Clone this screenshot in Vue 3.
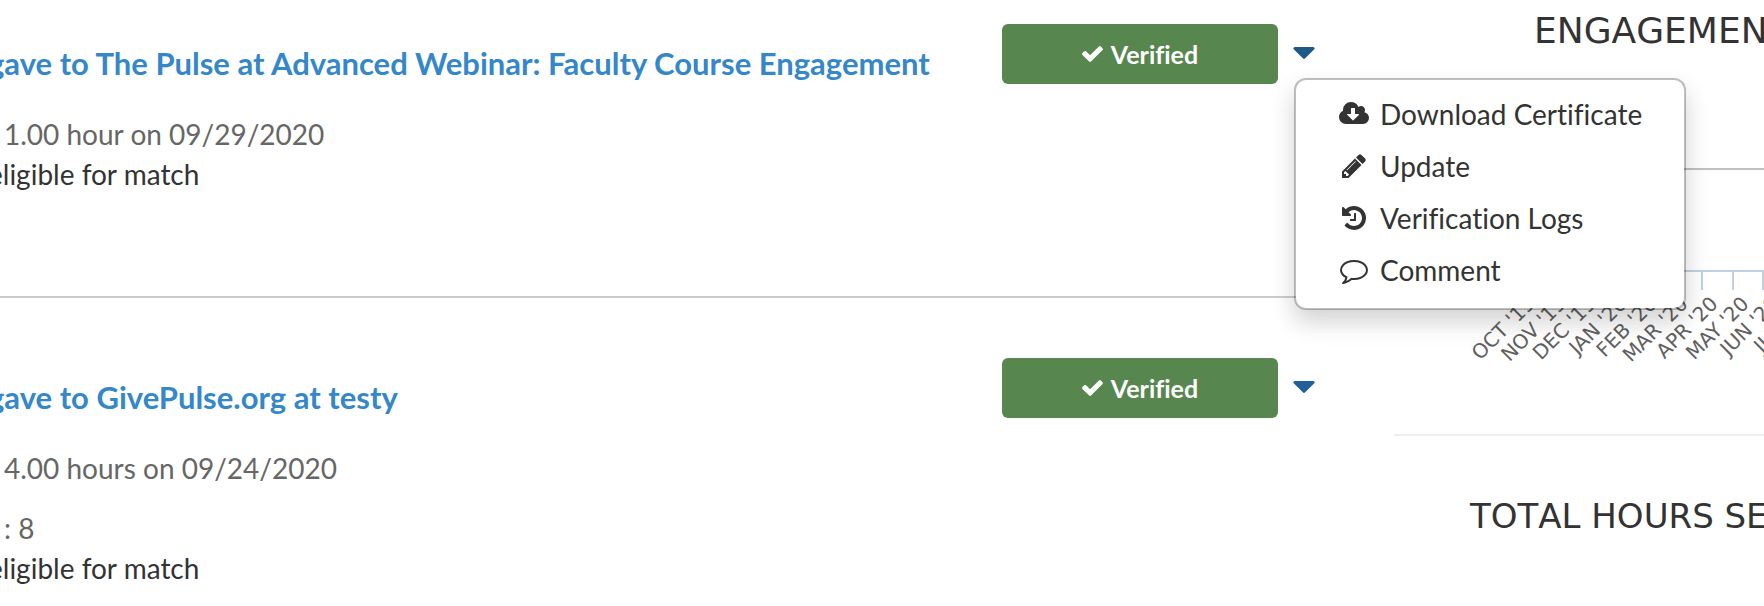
<script setup>
import { ref } from 'vue'

const entries = [
  {
    id: 1,
    title: 'gave to The Pulse at Advanced Webinar: Faculty Course Engagement',
    hours: '1.00 hour on 09/29/2020',
    impact: '',
    note: 'eligible for match',
  },
  {
    id: 2,
    title: 'gave to GivePulse.org at testy',
    hours: '4.00 hours on 09/24/2020',
    impact: ': 8',
    note: 'eligible for match',
  },
]

const openId = ref(1)
const toggle = (id) => {
  openId.value = openId.value === id ? 0 : id
}

const actions = [
  {
    label: 'Download Certificate',
    box: '-64 0 1920 1792',
    width: 30,
    path: 'M1216 928q0-14-9-23t-23-9h-224v-352q0-13-9.5-22.5t-22.5-9.5h-192q-13 0-22.5 9.5t-9.5 22.5v352h-224q-13 0-22.5 9.5t-9.5 22.5q0 14 9 23l352 352q9 9 23 9t23-9l351-351q10-12 10-24zm640 224q0 159-112.5 271.5t-271.5 112.5h-1088q-185 0-316.5-131.5t-131.5-316.5q0-130 70-240t188-165q-2-30-2-43 0-212 150-362t362-150q156 0 285.5 87t188.5 231q71-62 166-62 106 0 181 75t75 181q0 76-41 138 130 31 213.5 135.5t83.5 238.5z',
  },
  {
    label: 'Update',
    box: '0 0 1792 1792',
    width: 28,
    path: 'M491 1536l91-91-235-235-91 91v107h128v128h107zm523-928q0-22-22-22-10 0-17 7l-542 542q-7 7-7 17 0 22 22 22 10 0 17-7l542-542q7-7 7-17zm-54-192l416 416-832 832h-416v-416zm683 96q0 53-37 90l-166 166-416-416 166-165q36-38 90-38 53 0 91 38l235 234q37 39 37 91z',
  },
  {
    label: 'Verification Logs',
    box: '0 0 1792 1792',
    width: 28,
    path: 'M1664 896q0 156-61 298t-164 245-245 164-298 61q-172 0-327-72.5t-264-204.5q-7-10-6.5-22.5t8.5-20.5l137-138q10-9 25-9 16 2 23 12 73 95 179 147t225 52q104 0 198.5-40.5t163.5-109.5 109.5-163.5 40.5-198.5-40.5-198.5-109.5-163.5-163.5-109.5-198.5-40.5q-98 0-188 35.5t-160 101.5l137 138q31 30 14 69-17 40-59 40h-448q-26 0-45-19t-19-45v-448q0-42 40-59 39-17 69 14l130 129q107-101 244.5-156.5t284.5-55.5q156 0 298 61t245 164 164 245 61 298zm-640-288v448q0 14-9 23t-23 9h-320q-14 0-23-9t-9-23v-64q0-14 9-23t23-9h224v-352q0-14 9-23t23-9h64q14 0 23 9t9 23z',
  },
  {
    label: 'Comment',
    box: '0 0 1792 1792',
    width: 28,
    path: 'M896 384q-204 0-381.5 69.5t-282 187.5-104.5 255q0 112 71.5 213.5t201.5 175.5l87 50-27 96q-24 91-70 172 152-63 275-171l43-38 57 6q69 8 130 8 204 0 381.5-69.5t282-187.5 104.5-255-104.5-255-282-187.5-381.5-69.5zm896 512q0 174-120 321.5t-326 233-450 85.5q-70 0-145-8-198 175-460 242-49 14-114 22h-5q-15 0-27-10.5t-16-27.5v-1q-3-4-.5-12t2-10 4.5-9.5l6-9 7-8.5 8-9q7-8 31-34.5t34.5-38 31-39.5 32.5-51 27-59 26-76q-157-89-247.5-220t-90.5-281q0-174 120-321.5t326-233 450-85.5 450 85.5 326 233 120 321.5z',
  },
]

// Month categories of the engagement chart; each band is `step` units wide.
const months = ["OCT '19", "NOV '19", "DEC '19", "JAN '20", "FEB '20", "MAR '20", "APR '20", "MAY '20", "JUN '20", "JUL '20"]
const step = 30.5
const firstTick = 125
const ticks = months.map((label, i) => ({
  label,
  edge: Math.round(firstTick + i * step),
  center: Math.round(firstTick + (i + 0.5) * step),
}))
</script>

<template>
  <div class="page">
    <main class="feed">
      <article v-for="entry in entries" :key="entry.id" class="entry">
        <div class="text">
          <h2><a href="#">{{ entry.title }}</a></h2>
          <p class="muted">{{ entry.hours }}</p>
          <p v-if="entry.impact" class="muted impact">{{ entry.impact }}</p>
          <p class="note">{{ entry.note }}</p>
        </div>
        <button type="button" class="verified">
          <svg class="check" viewBox="121 334 1550 1188" aria-hidden="true">
            <path d="M1671 566q0 40-28 68l-724 724-136 136q-28 28-68 28t-68-28l-136-136-362-362q-28-28-28-68t28-68l136-136q28-28 68-28t68 28l294 295 656-657q28-28 68-28t68 28l136 136q28 28 28 68z" />
          </svg>
          <span>Verified</span>
        </button>
        <div class="dropdown">
          <button
            type="button"
            class="toggle"
            :class="{ open: openId === entry.id }"
            aria-label="Actions"
            :aria-expanded="openId === entry.id"
            @click="toggle(entry.id)"
          >
            <svg viewBox="384 640 1024 576" aria-hidden="true">
              <path d="M1408 704q0 26-19 45l-448 448q-19 19-45 19t-45-19l-448-448q-19-19-19-45t19-45 45-19h896q26 0 45 19t19 45z" />
            </svg>
          </button>
          <ul v-if="openId === entry.id" class="menu">
            <li v-for="action in actions" :key="action.label">
              <a href="#">
                <span class="icon">
                  <svg :viewBox="action.box" :width="action.width" height="28" aria-hidden="true">
                    <path :d="action.path" />
                  </svg>
                </span>
                {{ action.label }}
              </a>
            </li>
          </ul>
        </div>
      </article>
    </main>

    <aside class="stats">
      <section class="panel">
        <h3 class="engagement">ENGAGEMENT</h3>
        <svg class="chart" width="440" height="266" viewBox="0 0 440 266" role="img" aria-label="Engagement by month">
          <path class="grid" :d="`M${firstTick} 1H440`" />
          <path class="axis" :d="`M${firstTick} 103H440`" />
          <g v-for="tick in ticks" :key="tick.label">
            <path class="axis" :d="`M${tick.edge} 102V122`" />
            <text :transform="`translate(${tick.center + 2} 137) rotate(-45)`" text-anchor="end">{{ tick.label }}</text>
          </g>
        </svg>
      </section>
      <section class="panel">
        <h3 class="total">TOTAL HOURS SERVED</h3>
      </section>
    </aside>
  </div>
</template>

<style>
body {
  margin: 0;
  background: #fff;
}
</style>

<style scoped>
.page {
  display: grid;
  grid-template-columns: minmax(0, 1fr) 370px;
  column-gap: 30px;
  min-height: 100vh;
  overflow: hidden;
  box-sizing: border-box;
  font-family: Lato, "Liberation Sans", sans-serif;
  font-size: 28px;
  line-height: 40px;
  font-variant-ligatures: none;
  color: #333;
}

h2,
h3,
p,
ul {
  margin: 0;
  padding: 0;
}

button {
  border: 0;
  padding: 0;
  font: inherit;
  cursor: pointer;
}

/* The feed continues past the left window edge. */
.entry {
  display: flex;
  align-items: flex-start;
  padding: 60px 48px 102px 0;
  border-bottom: 2px solid #ccc;
}

.entry:first-child {
  padding-top: 24px;
}

.entry:last-child {
  border-bottom: 0;
  padding-bottom: 0;
}

.text {
  flex: 1;
  min-width: 0;
  margin-left: -12px;
  padding-top: 19px;
  white-space: nowrap;
}

h2 {
  margin-bottom: 31px;
  font-size: 31px;
  font-weight: 700;
  line-height: 40px;
}

h2 a {
  color: #3487c8;
  text-decoration: none;
}

.muted {
  padding-left: 16px;
  color: #666;
}

.impact {
  margin-top: 20px;
}

.verified {
  display: flex;
  align-items: center;
  justify-content: center;
  gap: 8px;
  flex: none;
  width: 276px;
  height: 60px;
  border-radius: 6px;
  background: #57874f;
  color: #fff;
  font-size: 25px;
  font-weight: 700;
}

.check {
  width: 21px;
  height: 16px;
  fill: currentColor;
}

.dropdown {
  position: relative;
  flex: none;
  margin-left: 14px;
}

.toggle {
  display: flex;
  align-items: center;
  height: 58px;
  padding: 0 1px;
  background: none;
  color: #235f9b;
}

.toggle.open {
  color: #1d5a87;
}

.toggle svg {
  width: 22px;
  height: 12px;
  fill: currentColor;
}

.menu {
  position: absolute;
  top: 54px;
  left: 2px;
  z-index: 5;
  width: 392px;
  box-sizing: border-box;
  padding: 10px 0;
  list-style: none;
  background: #fff;
  background-clip: padding-box;
  border: 2px solid rgba(0, 0, 0, 0.25);
  border-radius: 12px;
  box-shadow: 0 12px 24px rgba(0, 0, 0, 0.18);
}

.menu a {
  display: flex;
  align-items: center;
  gap: 8px;
  padding: 4px 32px 8px 40px;
  color: #333;
  text-decoration: none;
  white-space: nowrap;
}

.icon {
  display: flex;
  justify-content: center;
  width: 36px;
}

.icon svg {
  fill: currentColor;
}

.stats {
  min-width: 0;
  font-family: "DejaVu Sans", sans-serif;
}

.panel {
  overflow: hidden;
  white-space: nowrap;
}

.panel:first-child {
  border-bottom: 2px solid #eee;
}

h3 {
  font-weight: 400;
  font-kerning: none;
}

.engagement {
  padding: 11px 0 117px 140px;
  font-size: 36px;
}

.total {
  padding: 60px 0 60px 76px;
  font-size: 34px;
}

.chart {
  display: block;
}

.chart path {
  fill: none;
  stroke-width: 2;
}

.chart .grid {
  stroke: #c0c0c0;
}

.chart .axis {
  stroke: #c0d0e0;
}

.chart text {
  font-size: 20px;
  fill: #606060;
}
</style>
